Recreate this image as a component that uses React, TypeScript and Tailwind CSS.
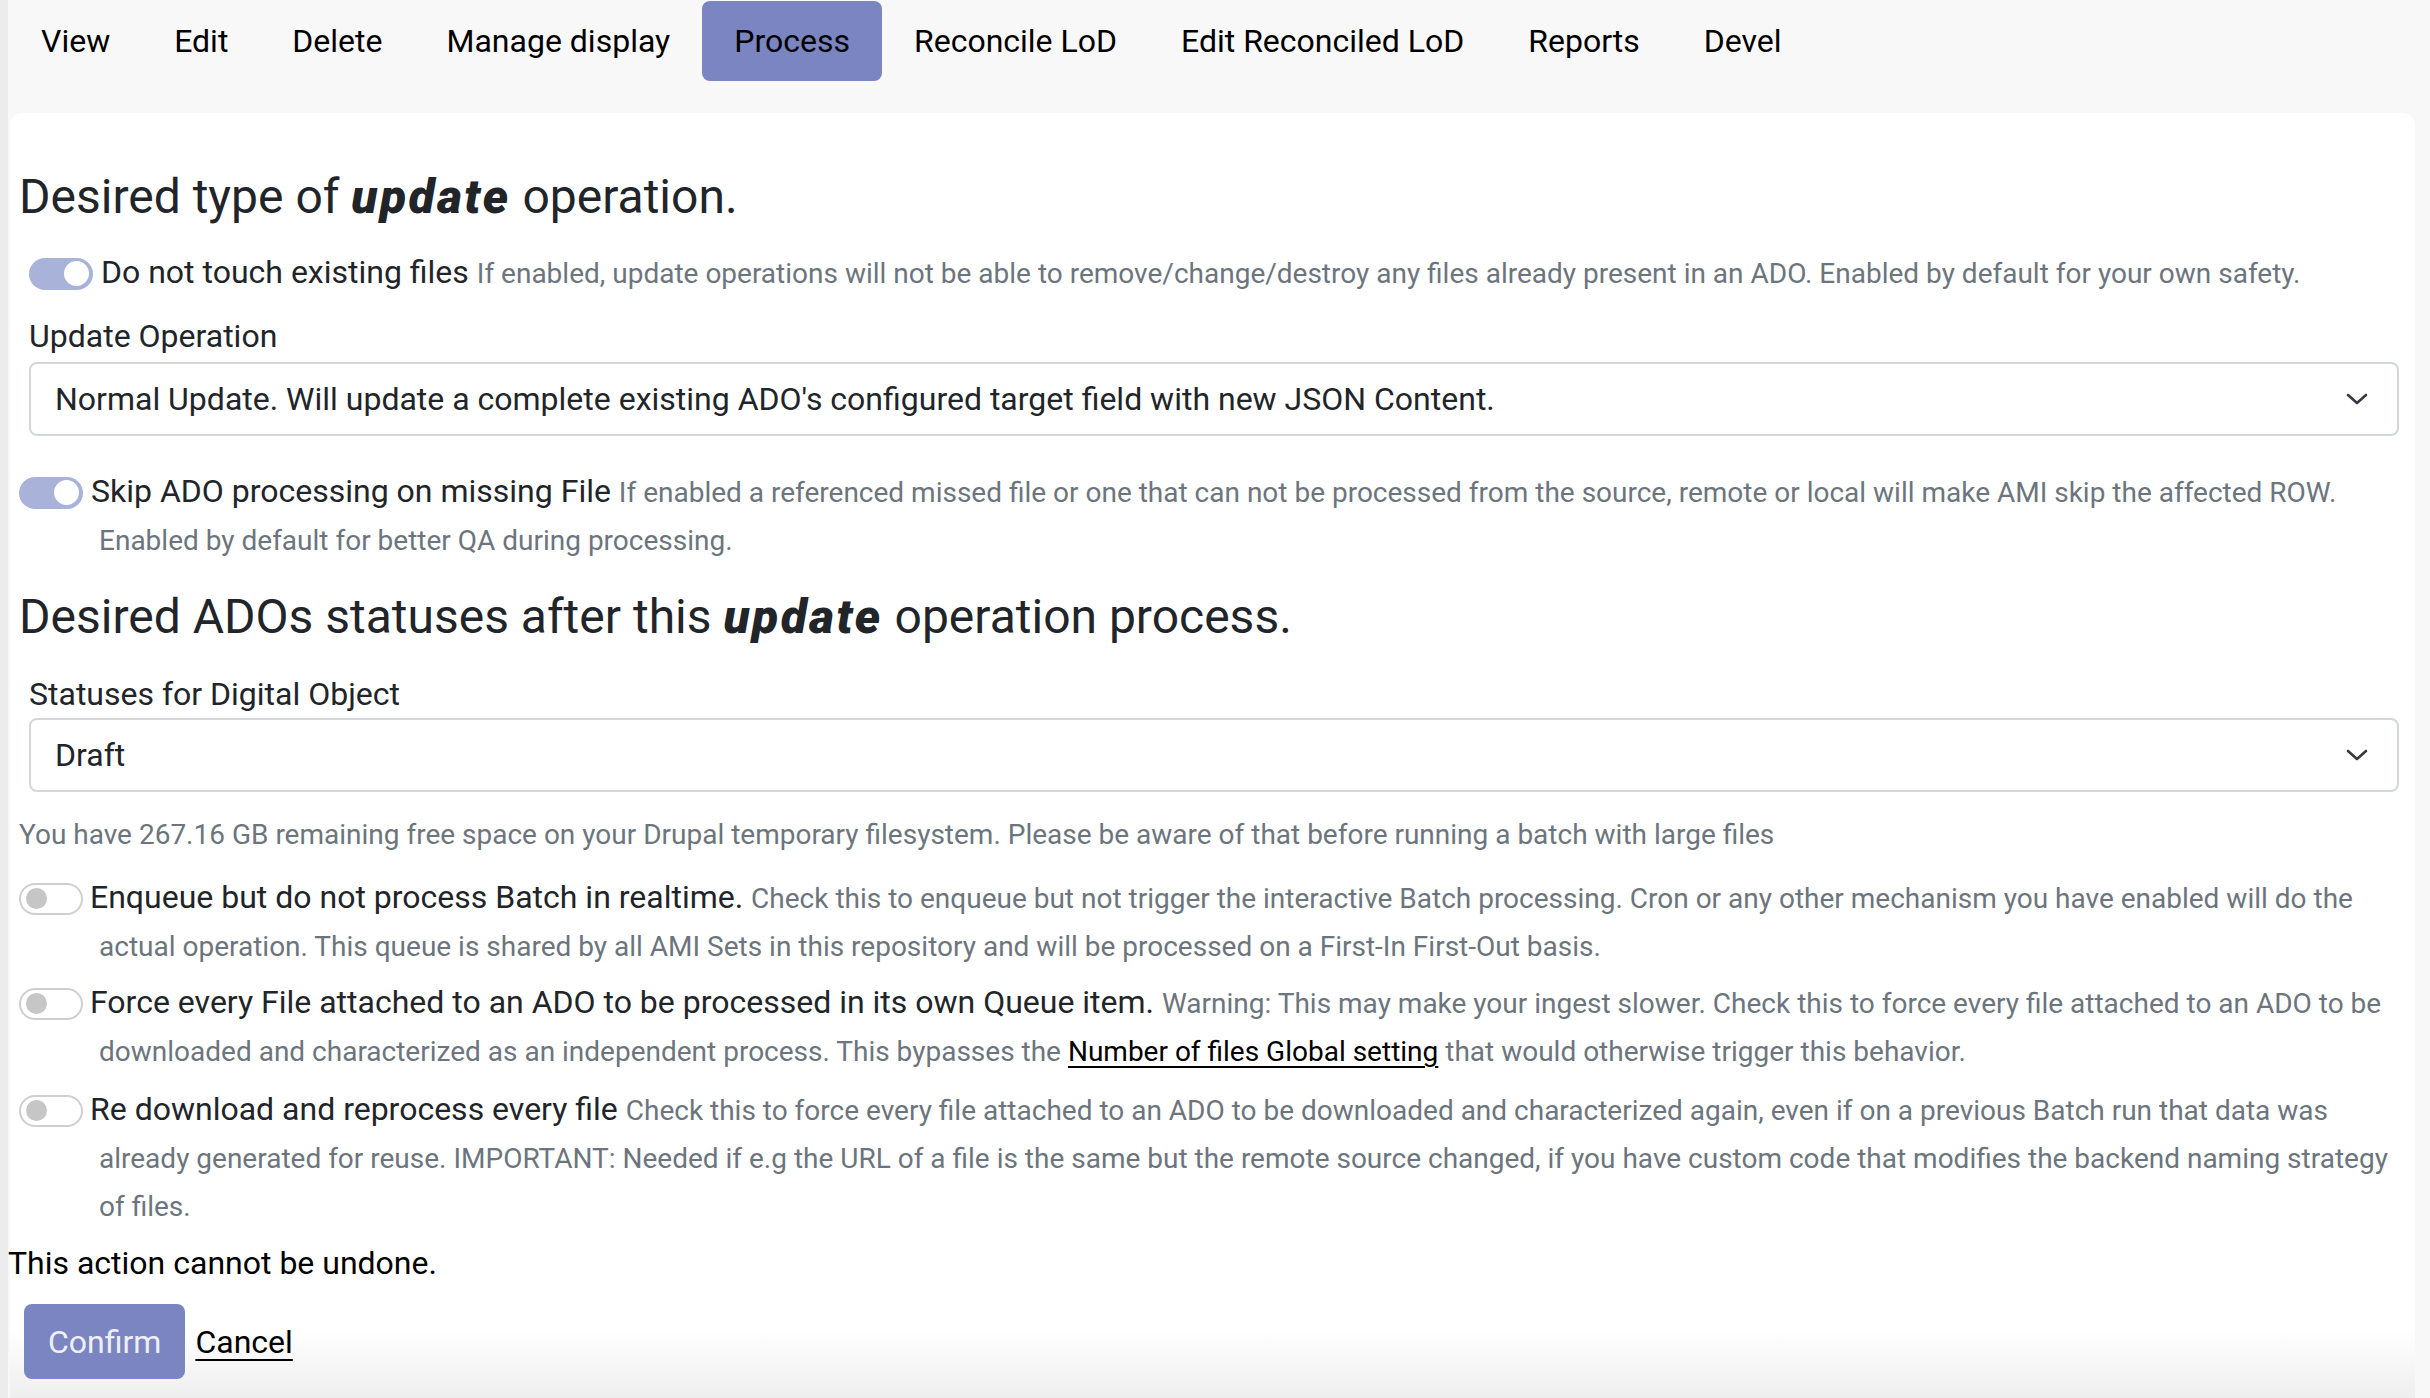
import React from "react";

function Toggle({ on }: { on: boolean }) {
  if (on) {
    return (
      <span className="inline-flex indent-0 align-middle w-[64px] h-[32px] rounded-full bg-[#a9b3d9] items-center justify-end pr-[4px] mr-[8px] -mt-[2px]">
        <span className="block w-[25px] h-[25px] rounded-full bg-white" />
      </span>
    );
  }
  return (
    <span className="inline-flex indent-0 align-middle w-[64px] h-[32px] rounded-full bg-white border-2 border-[#cfcfcf] items-center justify-start pl-[5px] mr-[7px] -mt-[2px]">
      <span className="block w-[21px] h-[21px] rounded-full bg-[#c6c6c6]" />
    </span>
  );
}

function Chevron() {
  return (
    <svg width="24" height="14" viewBox="0 0 24 14" fill="none" className="shrink-0">
      <path d="M3 3l9 8 9-8" stroke="#343a40" strokeWidth="2.6" strokeLinecap="round" strokeLinejoin="round" />
    </svg>
  );
}

function Select({ value, mt }: { value: string; mt: string }) {
  return (
    <div className={`${mt} h-[74px] border-2 border-[#d3d7dc] rounded-[8px] bg-white flex items-center pl-[24px] pr-[28px] justify-between`}>
      <span className="text-[32px] leading-[48px] text-[#212529]">{value}</span>
      <Chevron />
    </div>
  );
}

function Desc({ children }: { children: React.ReactNode }) {
  return <span className="text-[28px] leading-[28px] text-[#6c757d]">{children}</span>;
}

export default function App() {
  const tabs = ["View", "Edit", "Delete", "Manage display", "Process", "Reconcile LoD", "Edit Reconciled LoD", "Reports", "Devel"];
  return (
    <div className="min-h-[1398px] w-[2430px] overflow-hidden bg-[#f8f8f8] border-l-[8px] border-l-[#ececec] font-['Roboto','Liberation_Sans',sans-serif] text-[#212529]">
      <nav className="flex pl-[1px] pt-[1px] h-[82px]">
        {tabs.map((t) => (
          <div
            key={t}
            className={
              t === "Process"
                ? "h-[80px] px-[32px] flex items-center text-[32px] text-black bg-[#7a85c1] rounded-[8px]"
                : "h-[80px] px-[32px] flex items-center text-[32px] text-black"
            }
          >
            {t}
          </div>
        ))}
      </nav>
      <div className="mt-[31px] ml-[2px] mr-[15px] h-[1285px] rounded-t-[12px] bg-[linear-gradient(180deg,#ffffff_1218px,#eeeeee_1285px)] pl-[9px] pr-[16px] pt-[55px]">
        <h2 className="text-[48px] leading-[58px] font-normal text-[#212529]">
          Desired type of <em className="font-black italic tracking-[2.4px]">update</em> operation.
        </h2>

        <div className="pl-[10px] mt-[22px]">
          <div className="text-[32px] leading-[48px]">
            <Toggle on />
            <span>Do not touch existing files</span>{" "}
            <Desc>
              If enabled, update operations will not be able to remove/change/destroy any files already present in an ADO. Enabled by default for your own safety.
            </Desc>
          </div>
          <div className="mt-[16px] text-[32px] leading-[48px]">Update Operation</div>
          <Select mt="mt-[2px]" value="Normal Update. Will update a complete existing ADO's configured target field with new JSON Content." />
        </div>

        <div className="mt-[31px] text-[32px] leading-[48px] pl-[80px] -indent-[80px]">
          <Toggle on />
          <span>Skip ADO processing on missing File</span>{" "}
          <Desc>
            If enabled a referenced missed file or one that can not be processed from the source, remote or local will make AMI skip the affected ROW. Enabled by default for better QA during processing.
          </Desc>
        </div>

        <h2 className="mt-[25px] text-[48px] leading-[58px] font-normal text-[#212529]">
          Desired ADOs statuses after this <em className="font-black italic tracking-[2.4px]">update</em> operation process.
        </h2>

        <div className="pl-[10px] mt-[24px]">
          <div className="text-[32px] leading-[48px]">Statuses for Digital Object</div>
          <Select mt="mt-[0px]" value="Draft" />
        </div>

        <div className="mt-[19px] text-[28px] leading-[48px] text-[#6c757d]">
          You have 267.16 GB remaining free space on your Drupal temporary filesystem. Please be aware of that before running a batch with large files
        </div>

        <div className="mt-[14px] text-[32px] leading-[48px] pl-[80px] -indent-[80px]">
          <Toggle on={false} />
          <span>Enqueue but do not process Batch in realtime.</span>{" "}
          <Desc>
            Check this to enqueue but not trigger the interactive Batch processing. Cron or any other mechanism you have enabled will do the actual operation. This queue is shared by all AMI Sets in this repository and will be processed on a First-In First-Out basis.
          </Desc>
        </div>

        <div className="mt-[9px] text-[32px] leading-[48px] pl-[80px] -indent-[80px]">
          <Toggle on={false} />
          <span>Force every File attached to an ADO to be processed in its own Queue item.</span>{" "}
          <Desc>
            Warning: This may make your ingest slower. Check this to force every file attached to an ADO to be downloaded and characterized as an independent process. This bypasses the{" "}
            <a className="text-black underline underline-offset-[5px]">Number of files Global setting</a> that would otherwise trigger this behavior.
          </Desc>
        </div>

        <div className="mt-[11px] text-[32px] leading-[48px] pl-[80px] -indent-[80px]">
          <Toggle on={false} />
          <span>Re download and reprocess every file</span>{" "}
          <Desc>
            Check this to force every file attached to an ADO to be downloaded and characterized again, even if on a previous Batch run that data was already generated for reuse. IMPORTANT: Needed if e.g the URL of a file is the same but the remote source changed, if you have custom code that modifies the backend naming strategy of files.
          </Desc>
        </div>

        <div className="mt-[10px] -ml-[11px] text-[32px] leading-[48px] text-black">This action cannot be undone.</div>

        <div className="mt-[17px] ml-[5px] flex items-center gap-[10px]">
          <button className="h-[75px] px-[24px] rounded-[8px] bg-[#7a85c1] text-[32px] text-[#eef0f8]">Confirm</button>
          <a className="text-[32px] text-black underline decoration-2 underline-offset-[6px]">Cancel</a>
        </div>
      </div>
    </div>
  );
}
